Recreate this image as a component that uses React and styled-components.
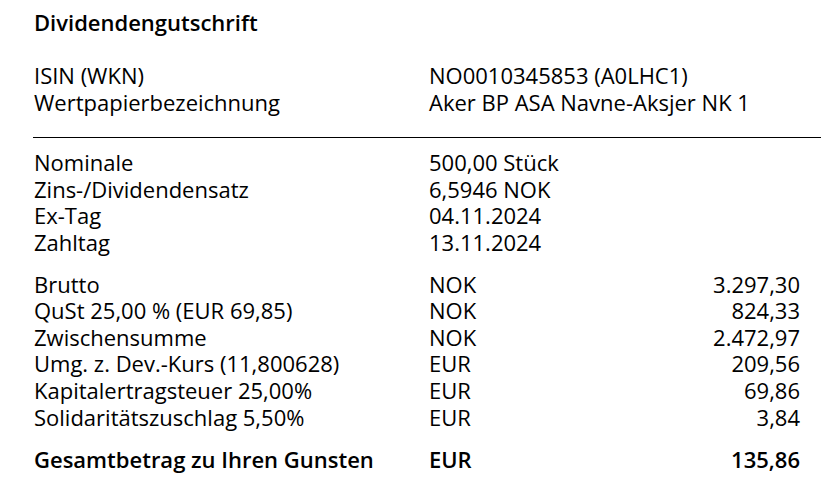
import React from 'react';
import styled, { createGlobalStyle } from 'styled-components';

const GlobalStyle = createGlobalStyle`
  body {
    margin: 0;
    background: #fff;
    font-family: 'Open Sans', 'Noto Sans', sans-serif;
    color: #000;
  }
`;

const Page = styled.div`
  width: 821px;
  padding: 9px 21px 0 34px;
  box-sizing: border-box;
  font-size: 22px;
  line-height: 26.6px;
`;

const Title = styled.h1`
  margin: 0 0 26.4px;
  font-size: 22px;
  font-weight: 600;
  line-height: 26.6px;
`;

const Section = styled.div`
  display: grid;
  grid-template-columns: 395px 1fr auto;
  margin-top: ${props => props.gap || 0}px;
`;

const Cell = styled.div`
  white-space: nowrap;
  font-weight: ${props => (props.bold ? 600 : 400)};
  text-align: ${props => (props.right ? 'right' : 'left')};
`;

const Wide = styled(Cell)`
  grid-column: 2 / 4;
`;

const Divider = styled.hr`
  margin: 22px -21px 11px -1px;
  border: 0;
  border-top: 1px solid #000;
`;

const security = [
  ['ISIN (WKN)', 'NO0010345853 (A0LHC1)'],
  ['Wertpapierbezeichnung', 'Aker BP ASA Navne-Aksjer NK 1'],
];

const details = [
  ['Nominale', '500,00 Stück'],
  ['Zins-/Dividendensatz', '6,5946 NOK'],
  ['Ex-Tag', '04.11.2024'],
  ['Zahltag', '13.11.2024'],
];

const amounts = [
  ['Brutto', 'NOK', '3.297,30'],
  ['QuSt 25,00 % (EUR 69,85)', 'NOK', '824,33'],
  ['Zwischensumme', 'NOK', '2.472,97'],
  ['Umg. z. Dev.-Kurs (11,800628)', 'EUR', '209,56'],
  ['Kapitalertragsteuer 25,00%', 'EUR', '69,86'],
  ['Solidaritätszuschlag 5,50%', 'EUR', '3,84'],
];

const App = () => {
  return (
    <Page>
      <GlobalStyle />
      <Title>Dividendengutschrift</Title>

      <Section>
        {security.map(([label, value]) => (
          <React.Fragment key={label}>
            <Cell>{label}</Cell>
            <Wide>{value}</Wide>
          </React.Fragment>
        ))}
      </Section>

      <Divider />

      <Section>
        {details.map(([label, value]) => (
          <React.Fragment key={label}>
            <Cell>{label}</Cell>
            <Wide>{value}</Wide>
          </React.Fragment>
        ))}
      </Section>

      <Section gap={15}>
        {amounts.map(([label, cur, amount]) => (
          <React.Fragment key={label}>
            <Cell>{label}</Cell>
            <Cell>{cur}</Cell>
            <Cell right>{amount}</Cell>
          </React.Fragment>
        ))}
      </Section>

      <Section gap={16}>
        <Cell bold>Gesamtbetrag zu Ihren Gunsten</Cell>
        <Cell bold>EUR</Cell>
        <Cell bold right>135,86</Cell>
      </Section>
    </Page>
  );
};

export default App;
